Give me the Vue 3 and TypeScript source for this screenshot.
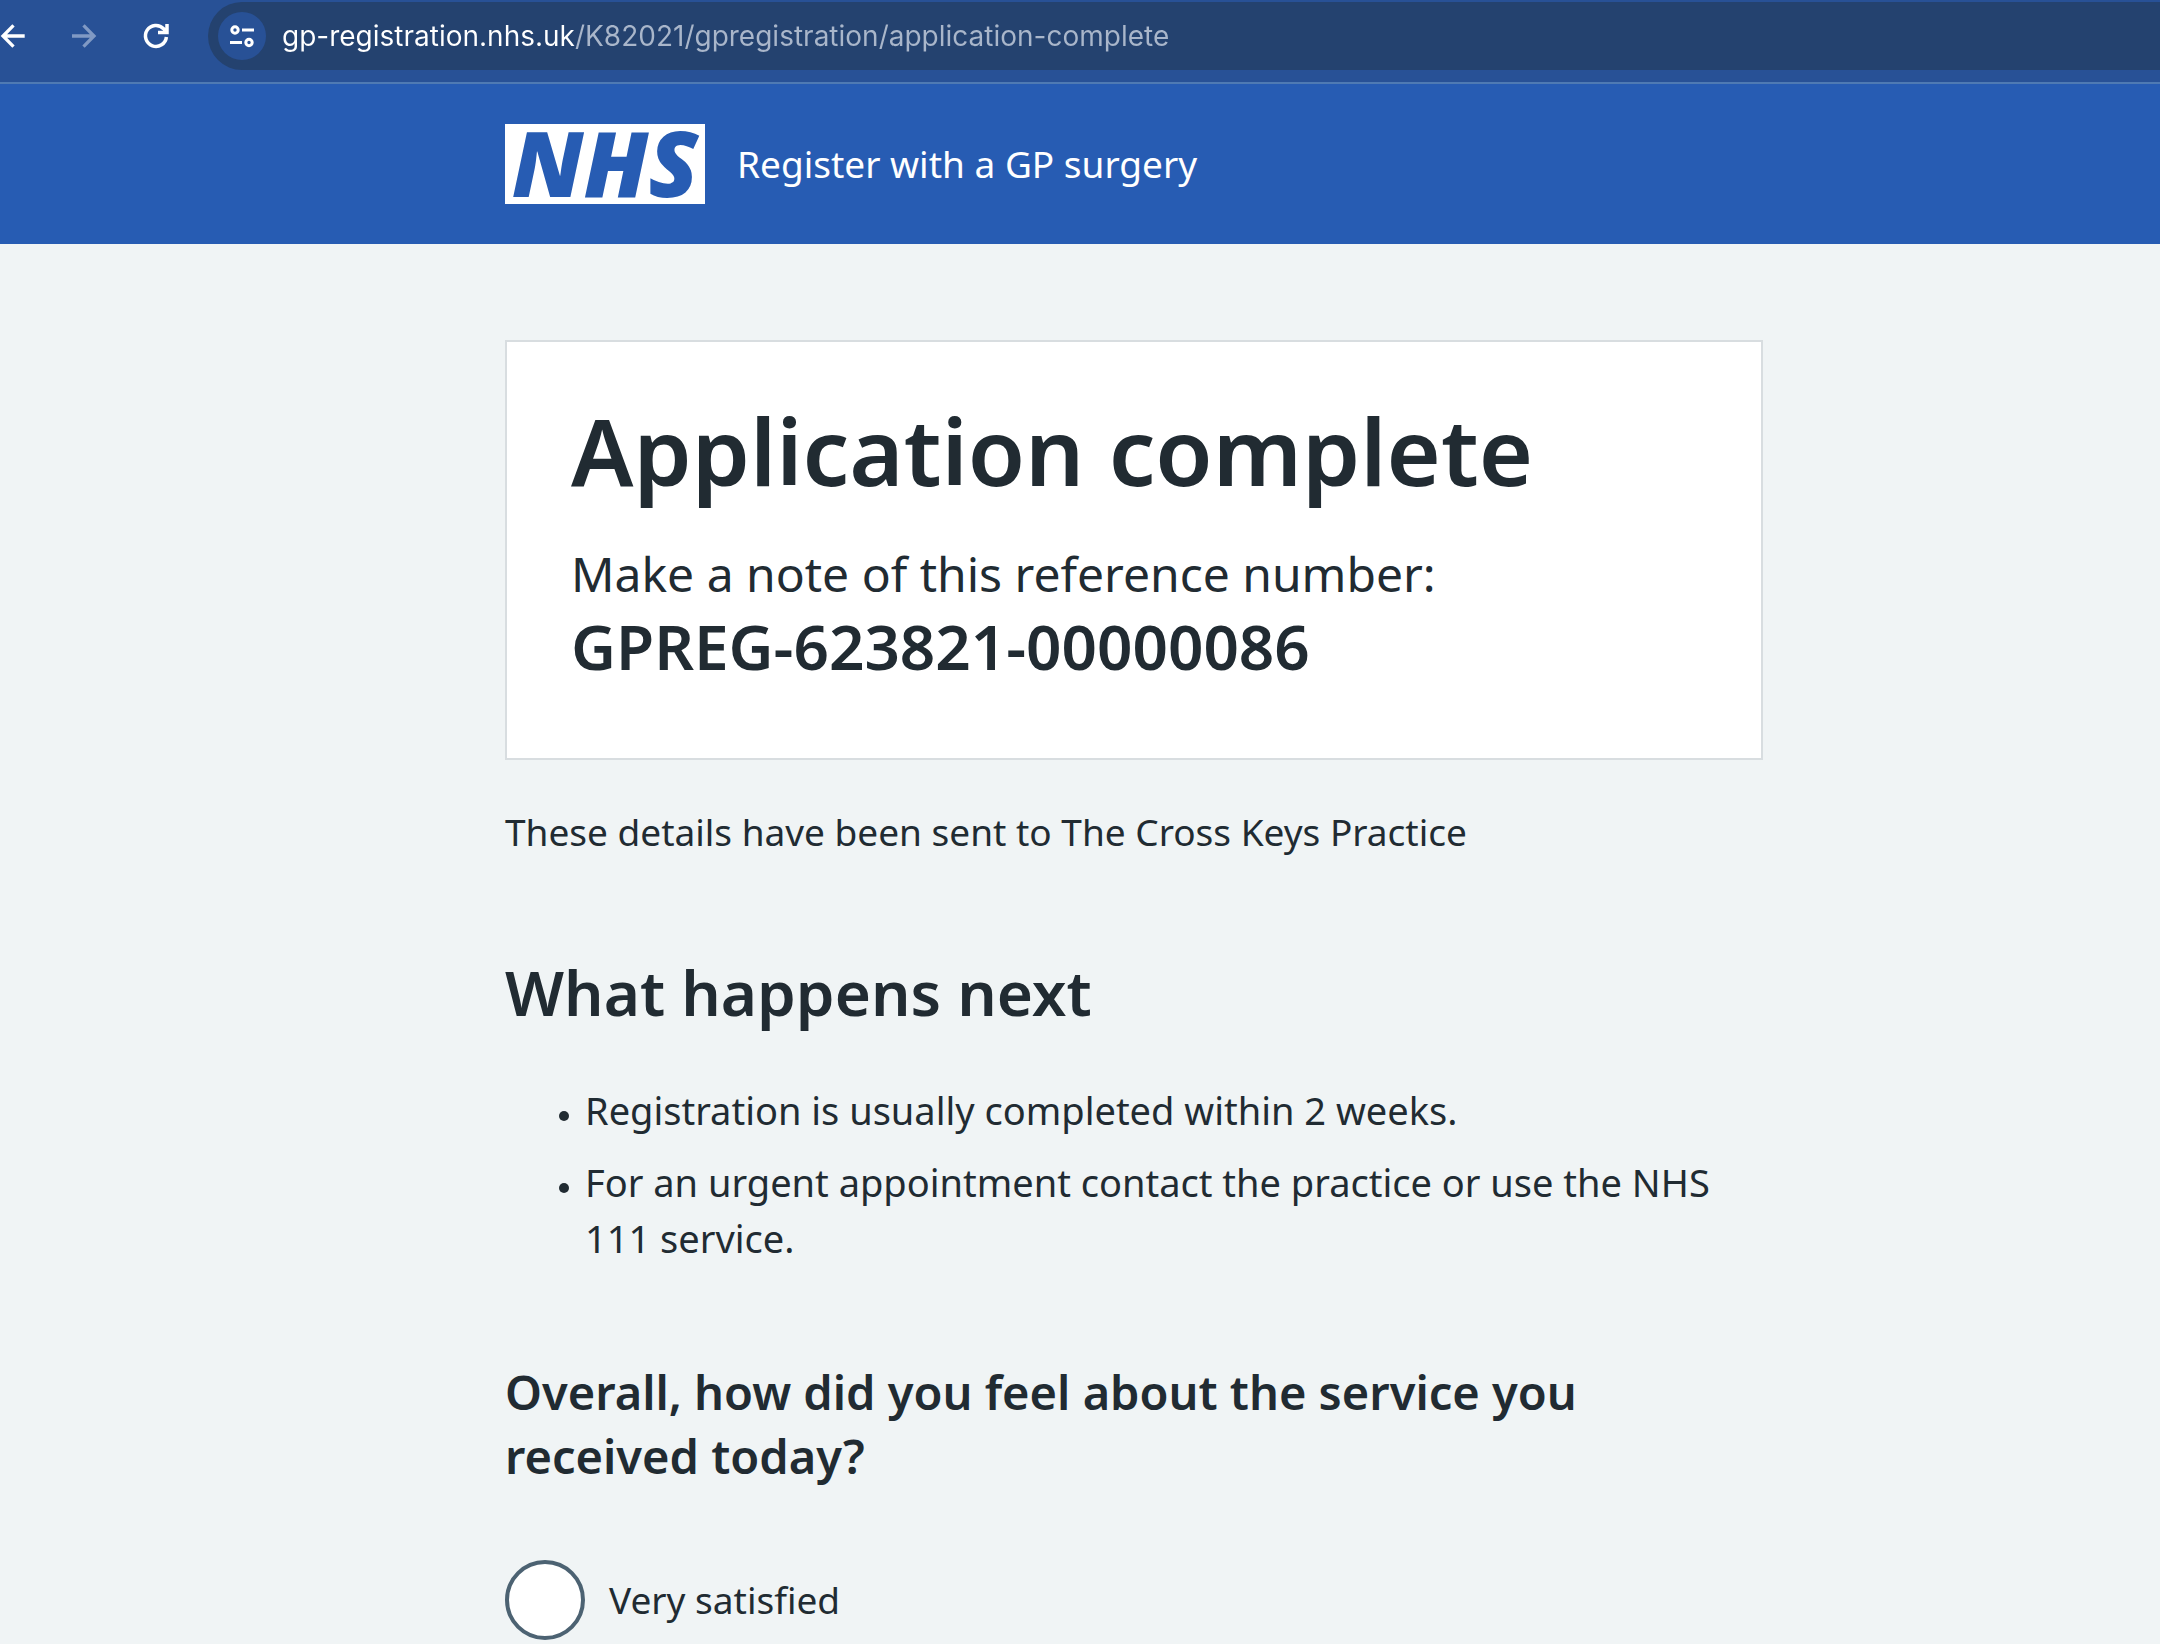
<script setup lang="ts">
import { ref } from 'vue'

const address = ref('gp-registration.nhs.uk/K82021/gpregistration/application-complete')
const referenceNumber = 'GPREG-623821-00000086'
const practiceName = 'The Cross Keys Practice'
const nextSteps: string[] = [
  'Registration is usually completed within 2 weeks.',
  'For an urgent appointment contact the practice or use the NHS 111 service.',
]
const ratings: { value: string; label: string }[] = [
  { value: 'very-satisfied', label: 'Very satisfied' },
]
const rating = ref('')
</script>

<template>
  <div class="page">
    <nav class="toolbar" aria-label="Browser">
      <div class="tools">
        <button class="tool" type="button" aria-label="Back">
          <svg viewBox="0 0 26 26" width="26" height="26" fill="none" stroke="currentColor" stroke-width="3.300">
            <path d="M24.700 13H3M13.500 2.300L3 13L13.500 23.700" />
          </svg>
        </button>
        <button class="tool muted" type="button" aria-label="Forward">
          <svg viewBox="0 0 26 26" width="26" height="26" fill="none" stroke="currentColor" stroke-width="3.300">
            <path d="M0 13H22M11.500 2.300L22 13L11.500 23.700" />
          </svg>
        </button>
        <button class="tool" type="button" aria-label="Reload">
          <svg viewBox="0 0 26 26" width="26" height="26" fill="none" stroke="currentColor" stroke-width="3.500">
            <path d="M22.400 14A10.500 10.500 0 1 1 19.600 5.700L22 8.500M23 1V9.500H14" />
          </svg>
        </button>
      </div>
      <div class="address-bar">
        <button class="site-info" type="button" aria-label="View site information">
          <svg viewBox="0 0 24 24" width="24" height="24" fill="none" stroke="currentColor" stroke-width="3">
            <circle cx="5" cy="6" r="3.200" />
            <path d="M12 6H24M0 18.500H12" />
            <circle cx="19" cy="18.500" r="3.200" />
          </svg>
        </button>
        <input v-model="address" class="address" type="text" aria-label="Address" spellcheck="false" />
      </div>
    </nav>

    <header class="header">
      <a class="home" href="#">
        <span class="logo">NHS</span>
        <span class="service">Register with a GP surgery</span>
      </a>
    </header>

    <main class="main">
      <section class="panel">
        <h1>Application complete</h1>
        <p class="note">Make a note of this reference number:</p>
        <p class="reference">{{ referenceNumber }}</p>
      </section>

      <p class="sent">These details have been sent to {{ practiceName }}</p>

      <h2>What happens next</h2>
      <ul class="steps">
        <li v-for="step in nextSteps" :key="step">{{ step }}</li>
      </ul>

      <form>
        <fieldset class="feedback">
          <legend>Overall, how did you feel about the service you received today?</legend>
          <div v-for="option in ratings" :key="option.value" class="option">
            <input :id="option.value" v-model="rating" type="radio" name="rating" :value="option.value" />
            <label :for="option.value">{{ option.label }}</label>
          </div>
        </fieldset>
      </form>
    </main>
  </div>
</template>

<style>
body {
  margin: 0;
  background: #f0f4f5;
}
</style>

<style scoped>
.page {
  --gutter: clamp(24px, 24vw, 505px);
  color: #212b32;
  font-family: 'Noto Sans', 'Open Sans', sans-serif;
  font-size: 37px;
  line-height: 56px;
}

.toolbar {
  display: flex;
  align-items: center;
  gap: 38px;
  padding: 2px 0 12px;
  border-bottom: 2px solid #4f7ab3;
  background: #285196;
  color: #fff;
}

.tools {
  display: flex;
  gap: 46px;
}

.tool {
  display: flex;
  padding: 0;
  border: 0;
  background: none;
  color: inherit;
}

.tool svg {
  overflow: visible;
}

.tool.muted {
  color: #8099c4;
}

.address-bar {
  display: flex;
  flex: 1;
  align-items: center;
  gap: 16px;
  height: 68px;
  padding-left: 10px;
  border-radius: 34px 0 0 34px;
  background: #24426f;
}

.site-info {
  display: grid;
  place-items: center;
  flex: none;
  width: 48px;
  height: 48px;
  padding: 0;
  border: 0;
  border-radius: 50%;
  background: #285196;
  color: #fff;
}

/* The host name is lit, the path after it is dimmed. */
.address {
  flex: 1;
  min-width: 0;
  height: 48px;
  padding: 0;
  border: 0;
  outline: 0;
  background: linear-gradient(90deg, #fff 293px, #a9b6ca 293px);
  background-clip: text;
  -webkit-background-clip: text;
  -webkit-text-fill-color: transparent;
  color: #fff;
  font: 28px/48px Inter, Roboto, sans-serif;
}

.header {
  padding: 40px 24px 40px var(--gutter);
  background: #275cb3;
}

.home {
  display: inline-flex;
  align-items: center;
  gap: 32px;
  color: #fff;
  text-decoration: none;
  vertical-align: top;
}

.logo {
  width: 200px;
  height: 80px;
  background: #fff;
  color: #275cb3;
  font-size: 91px;
  font-style: italic;
  font-weight: 900;
  line-height: 76px;
  text-align: center;
}

.main {
  max-width: 1258px;
  padding: 96px 24px 0 var(--gutter);
}

.panel {
  padding: 56px 64px 76px;
  border: 2px solid #d8dde0;
  background: #fff;
}

h1,
h2,
p,
ul {
  margin: 0;
}

h1 {
  margin-bottom: 36px;
  font-size: 93px;
  font-weight: 600;
  line-height: 104px;
}

.note {
  font-size: 48px;
  line-height: 72px;
}

.reference {
  font-size: 62px;
  font-weight: 600;
  line-height: 72px;
}

.sent {
  margin-top: 44px;
}

h2 {
  margin-top: 96px;
  font-size: 62px;
  font-weight: 600;
  line-height: 72px;
}

.steps {
  display: grid;
  gap: 16px;
  margin-top: 54px;
  padding-left: 54px;
  font-size: 38px;
  list-style: none;
}

.steps li {
  display: flex;
  align-items: flex-start;
  gap: 16px;
}

.steps li::before {
  content: '';
  flex: none;
  width: 10px;
  height: 10px;
  margin-top: 29px;
  border-radius: 50%;
  background: #212b32;
}

.feedback {
  min-width: 0;
  margin: 94px 0 0;
  padding: 0;
  border: 0;
}

legend {
  padding: 0;
  font-size: 47px;
  font-weight: 600;
  line-height: 64px;
}

.option {
  display: flex;
  align-items: center;
  gap: 24px;
  margin-top: 72px;
}

.option input {
  flex: none;
  appearance: none;
  width: 80px;
  height: 80px;
  margin: 0;
  border: 4px solid #4c6272;
  border-radius: 50%;
  background: #fff;
}

.option input:checked {
  background: radial-gradient(#212b32 20px, #fff 21px);
}
</style>
